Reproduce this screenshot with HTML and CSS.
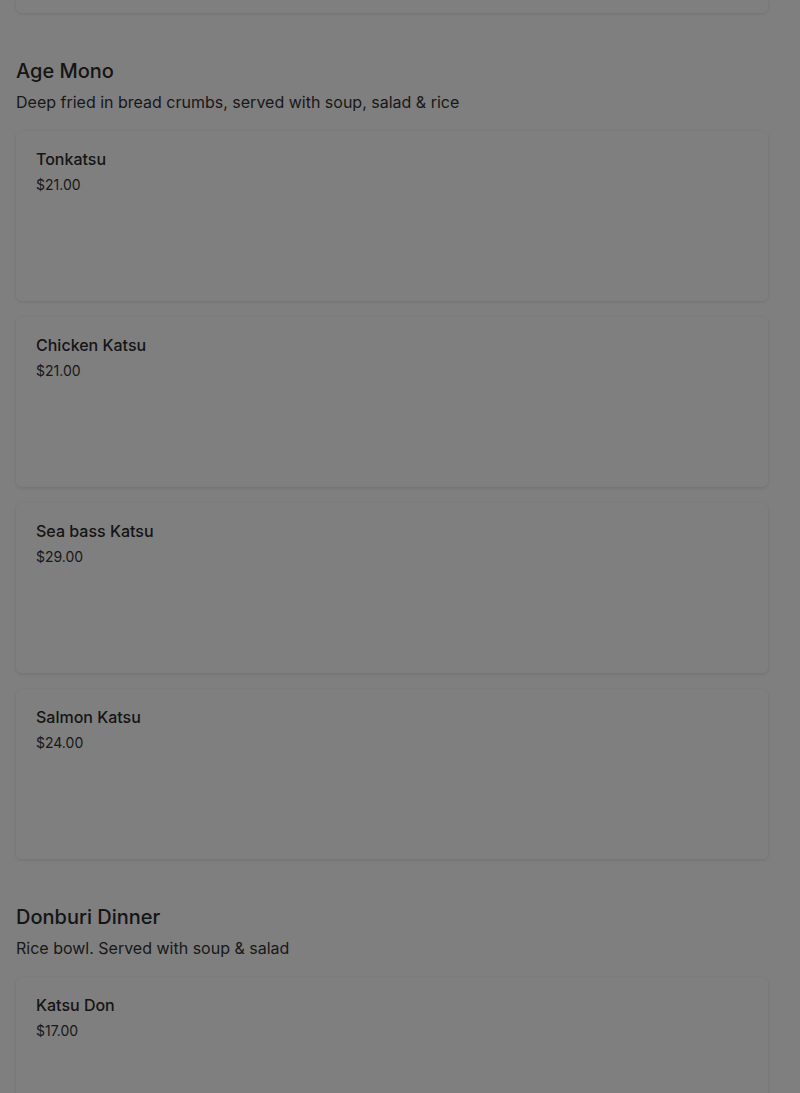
FILE: index.html
```html
<!DOCTYPE html>
<html lang="en">

<head>
    <meta charset="UTF-8">
    <meta name="viewport" content="width=device-width, initial-scale=1.0">
    <title>Menu</title>
    <link rel="stylesheet" href="styles.css">
</head>

<body>
    <div class="menu">
        <div class="item item-cut"></div>

        <section class="category">
            <h2>Age Mono</h2>
            <p class="category-desc">Deep fried in bread crumbs, served with soup, salad &amp; rice</p>
            <div class="item">
                <h3>Tonkatsu</h3>
                <span class="price">$21.00</span>
            </div>
            <div class="item">
                <h3>Chicken Katsu</h3>
                <span class="price">$21.00</span>
            </div>
            <div class="item">
                <h3>Sea bass Katsu</h3>
                <span class="price">$29.00</span>
            </div>
            <div class="item">
                <h3>Salmon Katsu</h3>
                <span class="price">$24.00</span>
            </div>
        </section>

        <section class="category">
            <h2>Donburi Dinner</h2>
            <p class="category-desc">Rice bowl. Served with soup &amp; salad</p>
            <div class="item">
                <h3>Katsu Don</h3>
                <span class="price">$17.00</span>
            </div>
        </section>
    </div>

    <div class="overlay"></div>
</body>

</html>
```

FILE: styles.css
```css
/* General Styles */
body {
    font-family: 'Inter', 'Liberation Sans', sans-serif;
    background-color: #fff;
    color: #2b2b2b;
    margin: 0;
    padding: 0;
    height: 1093px;
    overflow: hidden;
}

.menu {
    padding: 0 32px 0 16px;
}

/* Category Styles */
.category {
    padding-top: 44px;
}

.category h2 {
    font-size: 20px;
    line-height: 28px;
    font-weight: 500;
    margin: 0 0 5px;
}

.category-desc {
    font-size: 16px;
    line-height: 24px;
    margin: 0 0 17px;
    color: #333;
}

/* Item Card Styles */
.item {
    display: flex;
    flex-direction: column;
    gap: 4px;
    background-color: #fff;
    border-radius: 6px;
    box-shadow: 0 1px 4px rgba(0, 0, 0, 0.12);
    height: 170px;
    box-sizing: border-box;
    padding: 16px 20px;
    margin-bottom: 16px;
}

.item:last-child {
    margin-bottom: 0;
}

.item-cut {
    height: 13px;
    padding: 0;
    border-radius: 0 0 6px 6px;
    margin-bottom: 0;
}

.item h3 {
    font-size: 16px;
    line-height: 24px;
    font-weight: 500;
    margin: 0;
}

.price {
    font-size: 14px;
    line-height: 20px;
    color: #333;
}

/* Modal backdrop */
.overlay {
    position: fixed;
    inset: 0;
    background-color: rgba(0, 0, 0, 0.5);
}
```
